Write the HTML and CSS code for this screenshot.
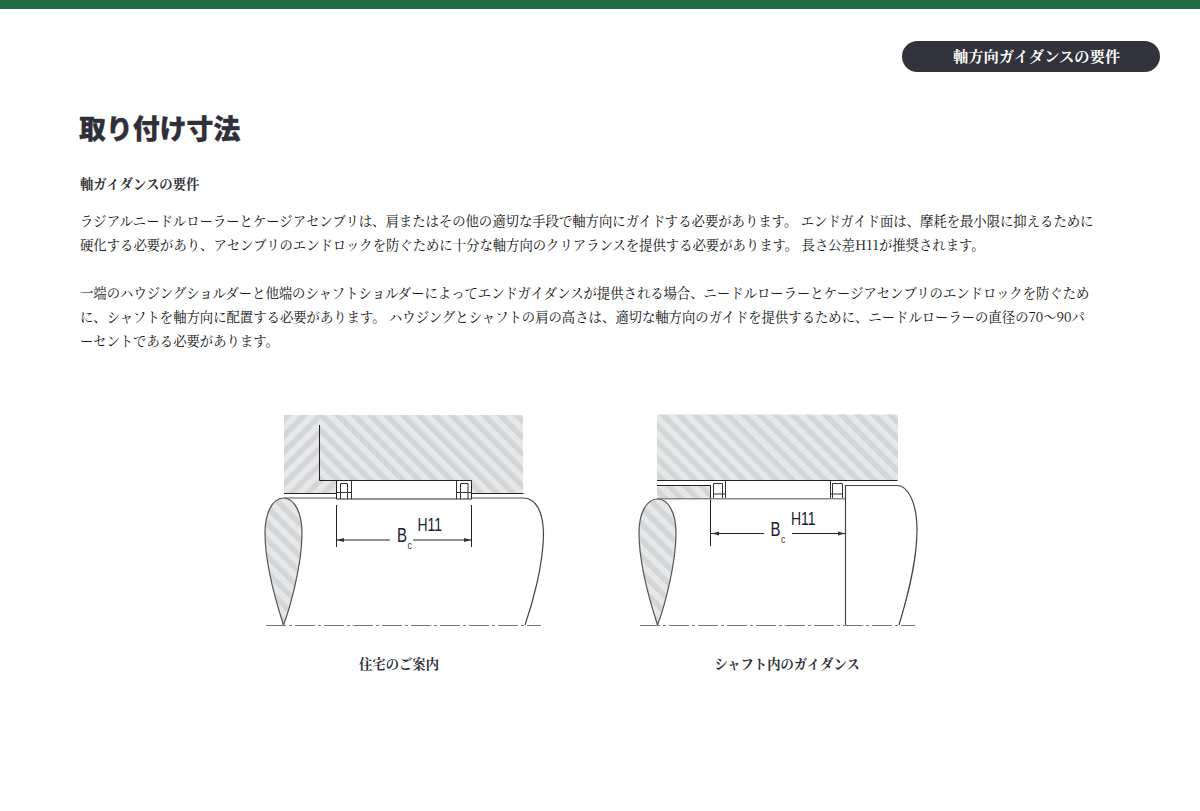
FILE: index.html
```html
<!DOCTYPE html>
<html lang="ja">
<head>
<meta charset="utf-8">
<title>取り付け寸法</title>
<link rel="stylesheet" href="styles.css">
</head>
<body>
<div class="topbar"></div>
<div class="tabrow"><div class="pill">軸方向ガイダンスの要件</div></div>
<main class="content">
<h1 class="title">取り付け寸法</h1>
<h2 class="subtitle">軸ガイダンスの要件</h2>
<p class="para">ラジアルニードルローラーとケージアセンブリは、肩またはその他の適切な手段で軸方向にガイドする必要があります。 エンドガイド面は、摩耗を最小限に抑えるために硬化する必要があり、アセンブリのエンドロックを防ぐために十分な軸方向のクリアランスを提供する必要があります。 長さ公差H11が推奨されます。</p>
<p class="para">一端のハウジングショルダーと他端のシャフトショルダーによってエンドガイダンスが提供される場合、ニードルローラーとケージアセンブリのエンドロックを防ぐために、シャフトを軸方向に配置する必要があります。 ハウジングとシャフトの肩の高さは、適切な軸方向のガイドを提供するために、ニードルローラーの直径の70～90パーセントである必要があります。</p>
<div class="figures">
<figure class="fig">
<svg class="diagram" viewBox="249 405 300 230" width="300" height="230" xmlns="http://www.w3.org/2000/svg">
<defs>
<pattern id="hb" width="11.5" height="11.5" patternUnits="userSpaceOnUse" patternTransform="rotate(-45)">
<rect width="11.5" height="11.5" fill="#e6e7e8"/>
<rect width="5.5" height="11.5" fill="#d3d5d7"/>
</pattern>
<pattern id="hf" width="11.5" height="11.5" patternUnits="userSpaceOnUse" patternTransform="rotate(45)">
<rect width="11.5" height="11.5" fill="#e6e7e8"/>
<rect width="5.5" height="11.5" fill="#d3d5d7"/>
</pattern>
</defs>
<rect x="284" y="415" width="239" height="78" fill="url(#hb)"/>
<rect x="284" y="415" width="35.5" height="78" fill="url(#hf)"/>
<rect x="319.5" y="481" width="16.5" height="12" fill="url(#hf)"/>
<rect x="336.5" y="480.5" width="135" height="18.5" fill="#fff"/>
<path class="ln" d="M319.5 425V480.5H471.5V499H336.5V480.5"/>
<path class="ln" d="M284 493.5H336.5M471.5 493.5H523.5"/>
<path class="thin" d="M351.5 480.5V499M456.5 480.5V499M340.5 499V483.5H347.5V499M336.5 492.500H351.5M460.5 499V483.500H468V499M456.5 492.500H471.5"/>
<path class="gr" d="M284 498H336M472 498H523"/>
<path class="out" d="M523 498C535 498 543 510 543.500 533C543.500 565 532 605 525 625"/>
<path class="tear" fill="url(#hb)" d="M283.500 498C272 498 265 514 265 533C265 565 278 608 283.500 625C290 608 302 565 302 533C302 514 295 498 283.500 498Z"/>
<path class="center" d="M266 625.500H541"/>
<path class="ln" d="M336.500 505V547M471.500 505V547M336.500 540H390M413 540H471.500"/>
<path class="arrow" d="M337 540l7-2v4zM471 540l-7-2v4z"/>
<text class="dim-b" transform="translate(397 542) scale(.77 1)">B</text>
<text class="sub" transform="translate(407.500 549) scale(.8 1)">c</text>
<text class="dim" x="417.500" y="531" textLength="24.500" lengthAdjust="spacingAndGlyphs">H11</text>
</svg>
<figcaption class="cap">住宅のご案内</figcaption>
</figure>
<figure class="fig">
<svg class="diagram" viewBox="637 405 300 230" width="300" height="230" xmlns="http://www.w3.org/2000/svg">
<rect x="657" y="414.500" width="241" height="66" fill="url(#hb)"/>
<rect x="657" y="485.500" width="53.500" height="13" fill="url(#hb)"/>
<path class="ln" d="M657 480.500H897.500M657 485.500H711M710.500 485.500V546"/>
<path class="thin" d="M725.500 480.500V499M830.500 480.500V499M713.500 499V483.500H722.500V499M713.500 494H725.500M832.500 499V483.500H842.500V499M830.500 494H842.500"/>
<path class="gr" d="M657 498.700H845"/>
<path class="out" d="M845.500 625V485.500H897C909 485.500 917 505 917 530C917 565 905 605 899 625"/>
<path class="tear" fill="url(#hb)" d="M657.500 499C646 499 639 514 639 533C639 565 652 608 657.500 625C664 608 676 565 676 533C676 514 669 499 657.500 499Z"/>
<path class="center" d="M640 625.500H915"/>
<path class="ln" d="M711 533.500H764M792 533.500H845"/>
<path class="arrow" d="M712 533.500l7-2v4zM845 533.500l-7-2v4z"/>
<text class="dim-b" transform="translate(770.500 536) scale(.77 1)">B</text>
<text class="sub" transform="translate(781 542.500) scale(.8 1)">c</text>
<text class="dim" x="791" y="524.500" textLength="24.500" lengthAdjust="spacingAndGlyphs">H11</text>
</svg>
<figcaption class="cap">シャフト内のガイダンス</figcaption>
</figure>
</div>
</main>
</body>
</html>
```
FILE: styles.css
```css
html, body { margin: 0; padding: 0; background: #fff; }
body { font-family: "Noto Serif CJK JP", "Liberation Serif", "Noto Sans CJK JP", serif; color: #2f2f38; overflow: hidden; height: 811px; }
.topbar { height: 9px; background: #236b42; }
.tabrow { display: flex; justify-content: flex-end; padding: 32px 40px 0 0; }
.pill { box-sizing: border-box; width: 258px; height: 31px; border-radius: 16px; background: #32323c; color: #fff; font-size: 15.27px; font-weight: 700; line-height: 29px; padding-left: 51px; }
.content { padding: 0 104px 0 80px; }
.title { margin: 35px 0 0 -1px; font-family: "Noto Sans CJK JP", sans-serif; font-size: 26.9px; font-weight: 900; line-height: 42px; color: #2f2f38; -webkit-text-stroke: 0.3px #2f2f38; }
.subtitle { margin: 23px 0 0; font-size: 13.33px; font-weight: 700; line-height: 24px; }
.para { margin: 13px 0 24px; font-size: 13.35px; line-height: 24px; color: #111; line-break: anywhere; }
.para + .para { margin-top: 24px; }
.figures { display: flex; gap: 88px; margin: 52px 0 0 169px; }
.fig { margin: 0; width: 300px; }
.diagram { display: block; }
.cap { margin: 17px 0 0; text-align: center; font-size: 13.33px; font-weight: 700; line-height: 24px; }
.ln { fill: none; stroke: #222; stroke-width: 1; }
.thin { fill: none; stroke: #333; stroke-width: 1; }
.gr { fill: none; stroke: #8a8a8a; stroke-width: 1.4; }
.out { fill: none; stroke: #444; stroke-width: 1.2; }
.tear { stroke: #555; stroke-width: 1.2; }
.center { fill: none; stroke: #777; stroke-width: 1; stroke-dasharray: 20 3 3 3; }
.arrow { fill: #333; }
.dim { font-family: "Liberation Sans", sans-serif; font-size: 18px; fill: #1c2030; }
.dim-b { font-family: "Liberation Sans", sans-serif; font-size: 19.5px; fill: #1c2030; }
.sub { font-family: "Liberation Sans", sans-serif; font-size: 11px; fill: #4a2a2a; }
```
